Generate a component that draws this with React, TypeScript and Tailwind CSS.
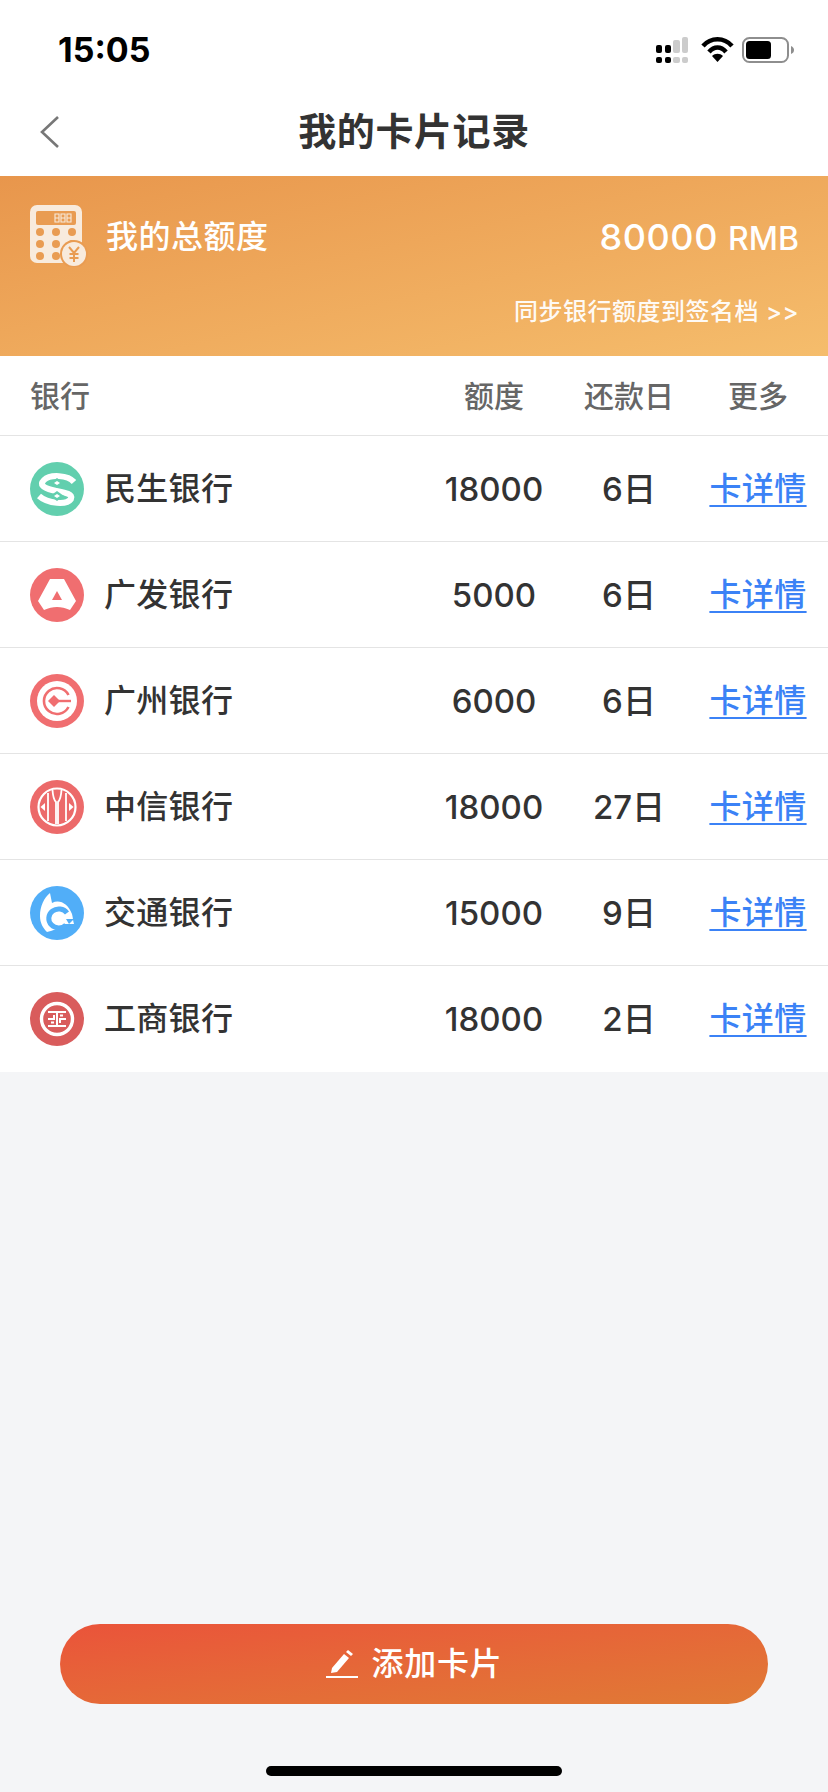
const F = "font-['Inter','Noto_Sans_CJK_SC',sans-serif]";

function Msb() {
  return (
    <svg width="54" height="54" viewBox="0 0 54 54">
      <circle cx="27" cy="27" r="27" fill="#62cfae" />
      <path d="M44 20 C38 13 20 12 14 18 C9 23 14 26 22 28 C30 30 44 31 41 37 C37 43 18 42 9 34" fill="none" stroke="#fff" strokeWidth="6" />
      <path d="M27 16 L34 21 L27 26 L20 21 Z" fill="#62cfae" />
      <path d="M27 19 L30 21 L27 23 L24 21 Z" fill="#fff" />
      <path d="M27 29 L34 34 L27 39 L20 34 Z" fill="#62cfae" />
      <path d="M27 32 L30 34 L27 36 L24 34 Z" fill="#fff" />
    </svg>
  );
}
function Gdb() {
  return (
    <svg width="54" height="54" viewBox="0 0 54 54">
      <circle cx="27" cy="27" r="27" fill="#f06e70" />
      <path d="M20 11 H34 L46 33 L40 42 C31 38 23 38 14 42 L8 33 Z" fill="#fff" />
      <path d="M27 23 L32 32 H22 Z" fill="#f06e70" />
    </svg>
  );
}
function Gzb() {
  return (
    <svg width="54" height="54" viewBox="0 0 54 54">
      <circle cx="27" cy="27" r="27" fill="#f06e70" />
      <circle cx="27" cy="27" r="20" fill="#fff" />
      <path d="M38.500 21 A 13 13 0 1 0 38.500 33" fill="none" stroke="#f06e70" strokeWidth="2.600" />
      <path d="M18 27 L24 21 L30 27 L24 33 Z" fill="#f06e70" />
      <path d="M28 27 H41" stroke="#f06e70" strokeWidth="2.400" />
    </svg>
  );
}
function Citic() {
  return (
    <svg width="54" height="54" viewBox="0 0 54 54">
      <circle cx="27" cy="27" r="27" fill="#ec6a6a" />
      <circle cx="27" cy="27" r="18.500" fill="none" stroke="#fff" strokeWidth="2.200" />
      <path d="M18 13 V41 M36 13 V41" stroke="#fff" strokeWidth="1.800" fill="none" />
      <path d="M22.500 10 C23 18 25 21 26 22 V44 M31.500 10 C31 18 29 21 28 22 V44" stroke="#fff" strokeWidth="1.800" fill="none" />
      <path d="M10.500 27 L15 23 V31 Z M43.500 27 L39 23 V31 Z" fill="#fff" />
    </svg>
  );
}
function Bocom() {
  return (
    <svg width="54" height="54" viewBox="0 0 54 54">
      <circle cx="27" cy="27" r="27" fill="#51aef8" />
      <path d="M20 7 L22 17 C30 13 38 18 42 28 C43 32 43 35 44 38 L34 38 C28 43 22 45 17 46 C13 42 10 37 10 30 C10 20 14 12 20 7 Z" fill="#fff" />
      <path d="M37 27 A 10 9.500 0 1 0 36 39" fill="none" stroke="#51aef8" strokeWidth="5" />
      <path d="M36 33 H44 L39 38 Z" fill="#51aef8" />
    </svg>
  );
}
function Icbc() {
  return (
    <svg width="54" height="54" viewBox="0 0 54 54">
      <circle cx="27" cy="27" r="27" fill="#d95c5c" />
      <circle cx="27" cy="27" r="15.500" fill="none" stroke="#fff" strokeWidth="3.400" />
      <path d="M18 20 H36 M18 34 H36 M18 27 H24 V23 M36 27 H30 V31 M27 20 V34 M21 30.500 H24 M30 23.500 H33" stroke="#fff" strokeWidth="2" fill="none" />
    </svg>
  );
}

const rows = [
  { name: "民生银行", amt: "18000", day: "6日", Logo: Msb },
  { name: "广发银行", amt: "5000", day: "6日", Logo: Gdb },
  { name: "广州银行", amt: "6000", day: "6日", Logo: Gzb },
  { name: "中信银行", amt: "18000", day: "27日", Logo: Citic },
  { name: "交通银行", amt: "15000", day: "9日", Logo: Bocom },
  { name: "工商银行", amt: "18000", day: "2日", Logo: Icbc },
];

export default function App() {
  return (
    <div className={`${F} w-[828px] h-[1792px] flex flex-col bg-[#f4f5f7] overflow-hidden`}>
      <div className="h-[88px] bg-white flex items-start justify-between pl-[58px] pr-[32px] pt-[30px]">
        <span className="text-[34px] leading-[40px] font-bold text-black font-['Inter',sans-serif]">15:05</span>
        <svg width="140" height="28" viewBox="0 0 140 28" className="mt-[6px]">
          <rect x="0" y="9" width="6" height="8" rx="2" fill="#000" />
          <rect x="9" y="9" width="6" height="8" rx="2" fill="#000" />
          <rect x="17" y="4" width="7" height="13" rx="2" fill="#ccc" />
          <rect x="26" y="1" width="6" height="16" rx="2" fill="#ccc" />
          <rect x="0" y="21" width="6" height="6" rx="2" fill="#000" />
          <rect x="9" y="21" width="6" height="6" rx="2" fill="#000" />
          <rect x="17" y="21" width="7" height="6" rx="2" fill="#ccc" />
          <rect x="26" y="21" width="6" height="6" rx="2" fill="#ccc" />
          <path d="M47 10 C55 1 68 1 76 10" fill="none" stroke="#000" strokeWidth="4.500" />
          <path d="M53 16 C58 10 65 10 70 16" fill="none" stroke="#000" strokeWidth="4.500" />
          <path d="M61.500 26 L56 20 C59 17 64 17 67 20 Z" fill="#000" />
          <rect x="87" y="2" width="45" height="24" rx="6.500" fill="none" stroke="#8e8e8e" strokeWidth="2" />
          <rect x="90" y="5" width="25" height="18" rx="3.500" fill="#000" />
          <path d="M135 10 C137 11 138 12 138 14 C138 16 137 17 135 18 Z" fill="#8e8e8e" />
        </svg>
      </div>

      <div className="h-[88px] bg-white relative flex items-center justify-center">
        <svg width="22" height="34" viewBox="0 0 22 34" className="absolute left-[39px] top-[27px]">
          <path d="M19 2 L3 17 L19 32" fill="none" stroke="#777" strokeWidth="2.600" />
        </svg>
        <span className="text-[38px] leading-[50px] font-semibold text-[#333] mt-[-2px] tracking-[0.6px]">我的卡片记录</span>
      </div>

      <div className="h-[180px] bg-gradient-to-br from-[#e8964c] to-[#f5bd6c] pl-[30px] pr-[29px] pt-[30px] flex flex-col">
        <div className="flex items-center justify-between h-[58px]">
          <div className="flex items-center gap-[18px]">
            <svg width="58" height="62" viewBox="0 0 58 62" className="mt-[2px]">
              <rect x="0" y="0" width="52" height="58" rx="7" fill="#f8ebdd" />
              <rect x="6" y="6" width="40" height="14" rx="2" fill="#e99c52" />
              <path d="M25 9 H29 V17 H25 Z M31 9 H35 V17 H31 Z M37 9 H41 V17 H37 Z M25 13 H29 M31 13 H35 M37 13 H41" fill="none" stroke="#f8ebdd" strokeWidth="1.100" />
              {[0, 1, 2].map((r) =>
                [0, 1, 2].map((c) => (
                  <circle key={`${r}${c}`} cx={10 + c * 16} cy={27 + r * 12} r="4" fill="#e99c52" />
                ))
              )}
              <circle cx="44" cy="49" r="14" fill="#e99c52" />
              <circle cx="44" cy="49" r="12" fill="#f8ebdd" />
              <path d="M39 42 L44 48 L49 42 M44 48 V57 M39.500 49 H48.500 M39.500 53 H48.500" fill="none" stroke="#e99c52" strokeWidth="2" />
            </svg>
            <span className="text-[32px] leading-[44px] font-medium text-white mt-[3px] tracking-[0.5px]">我的总额度</span>
          </div>
          <div className="flex items-baseline gap-[10px] text-white font-medium mt-[6px]">
            <span className="text-[36px] leading-[44px] tracking-[0.6px]">80000</span>
            <span className="text-[32px] leading-[44px]">RMB</span>
          </div>
        </div>
        <div className="mt-[31px] text-right text-[24px] leading-[34px] font-medium tracking-[0.5px] text-white/95">同步银行额度到签名档 &gt;&gt;</div>
      </div>

      <div className="h-[80px] bg-white grid grid-cols-[404px_120px_150px_108px] items-center pl-[30px] pt-[1px] text-[#666] font-medium border-b border-[#e4e4e4]">
        <span className="text-[30px] leading-[40px]">银行</span>
        <span className="text-[30px] leading-[40px] text-center">额度</span>
        <span className="text-[30px] leading-[40px] text-center">还款日</span>
        <span className="text-[30px] leading-[40px] text-center">更多</span>
      </div>

      <div className="flex flex-col">
        {rows.map(({ name, amt, day, Logo }, i) => (
          <div
            key={name}
            className={`h-[106px] bg-white grid grid-cols-[404px_120px_150px_108px] items-center pl-[30px] text-[#333] font-medium ${i < 5 ? "border-b border-[#e4e4e4]" : ""}`}
          >
            <div className="flex items-center gap-[20px]">
              <Logo />
              <span className="text-[32px] leading-[44px] tracking-[0.3px]">{name}</span>
            </div>
            <span className="text-center text-[33px] leading-[44px]">{amt}</span>
            <span className="text-center text-[33px] leading-[44px]">{day}</span>
            <span className="text-center text-[32px] leading-[44px] tracking-[0.4px] text-[#3b82f6] underline decoration-2 underline-offset-[5px]">卡详情</span>
          </div>
        ))}
      </div>

      <div className="flex-1" />

      <div className="px-[60px]">
        <div className="h-[80px] w-[708px] rounded-full bg-gradient-to-br from-[#ea533a] to-[#e07a35] flex items-center justify-center gap-[14px]">
          <svg width="32" height="32" viewBox="0 0 32 32">
            <path d="M6 20 L18 6 L23 10 L11 24 L5 25 Z" fill="#fff" />
            <path d="M20 4 L22 2 L27 6 L25 8 Z" fill="#fff" />
            <rect x="0" y="28" width="32" height="2" fill="#fff" />
          </svg>
          <span className="text-[32px] leading-[44px] font-medium tracking-[0.7px] text-white">添加卡片</span>
        </div>
      </div>

      <div className="h-[88px] flex items-start justify-center pt-[62px]">
        <div className="w-[296px] h-[10px] rounded-full bg-black" />
      </div>
    </div>
  );
}
